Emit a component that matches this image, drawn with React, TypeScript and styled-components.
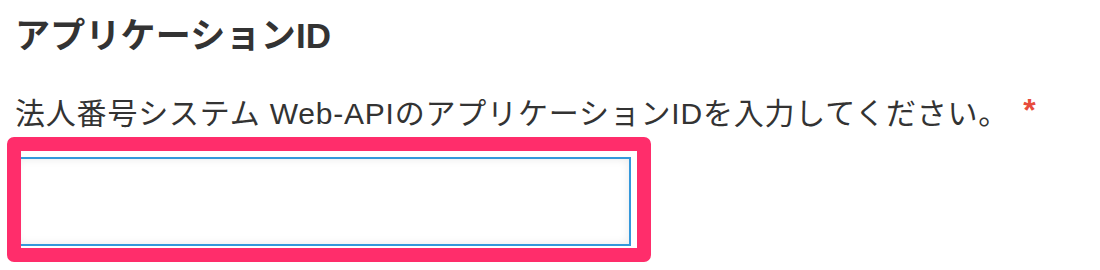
import React from "react"
import styled, { createGlobalStyle } from "styled-components"

const GlobalStyle = createGlobalStyle`
  html, body {
    margin: 0;
    padding: 0;
    background: #fff;
  }
  body {
    font-family: "Liberation Sans", "Noto Sans CJK JP", sans-serif;
    color: #333;
  }
`

const Page = styled.div`
  width: 1100px;
  height: 270px;
  padding: 0 15px;
  box-sizing: border-box;
  overflow: hidden;
`

const Title = styled.h3`
  margin: 15px 0 0;
  font-size: 35px;
  line-height: 42px;
  font-weight: 700;
  letter-spacing: 0.2px;
  color: #333;
`

const Label = styled.label`
  display: block;
  margin-top: 35px;
  font-size: 30px;
  line-height: 36px;
  letter-spacing: 0.8px;
  color: #333;
`

const Required = styled.span`
  margin-left: 14px;
  color: #e74c3c;
  font-weight: 700;
  font-size: 32px;
  vertical-align: 3px;
`

const Field = styled.div`
  position: relative;
  margin-top: 25px;
  width: 616px;
`

const Input = styled.input`
  display: block;
  width: 100%;
  height: 89px;
  box-sizing: border-box;
  border: 2.5px solid #3498db;
  border-radius: 0;
  background: #fff;
  box-shadow: inset 0 0 10px rgba(0, 0, 0, 0.09);
  outline: none;
  font-size: 30px;
  font-family: inherit;
  padding: 0 12px;
`

const Highlight = styled.div`
  position: absolute;
  left: -8px;
  top: -20px;
  right: -20px;
  bottom: -16px;
  border: 14px solid #ff2d6b;
  border-radius: 7px;
  pointer-events: none;
`

export default function App() {
  return (
    <>
      <GlobalStyle />
      <Page>
        <Title>アプリケーションID</Title>
        <Label htmlFor="app-id">
          法人番号システム Web-APIのアプリケーションIDを入力してください。
          <Required>*</Required>
        </Label>
        <Field>
          <Input id="app-id" type="text" />
          <Highlight />
        </Field>
      </Page>
    </>
  )
}
